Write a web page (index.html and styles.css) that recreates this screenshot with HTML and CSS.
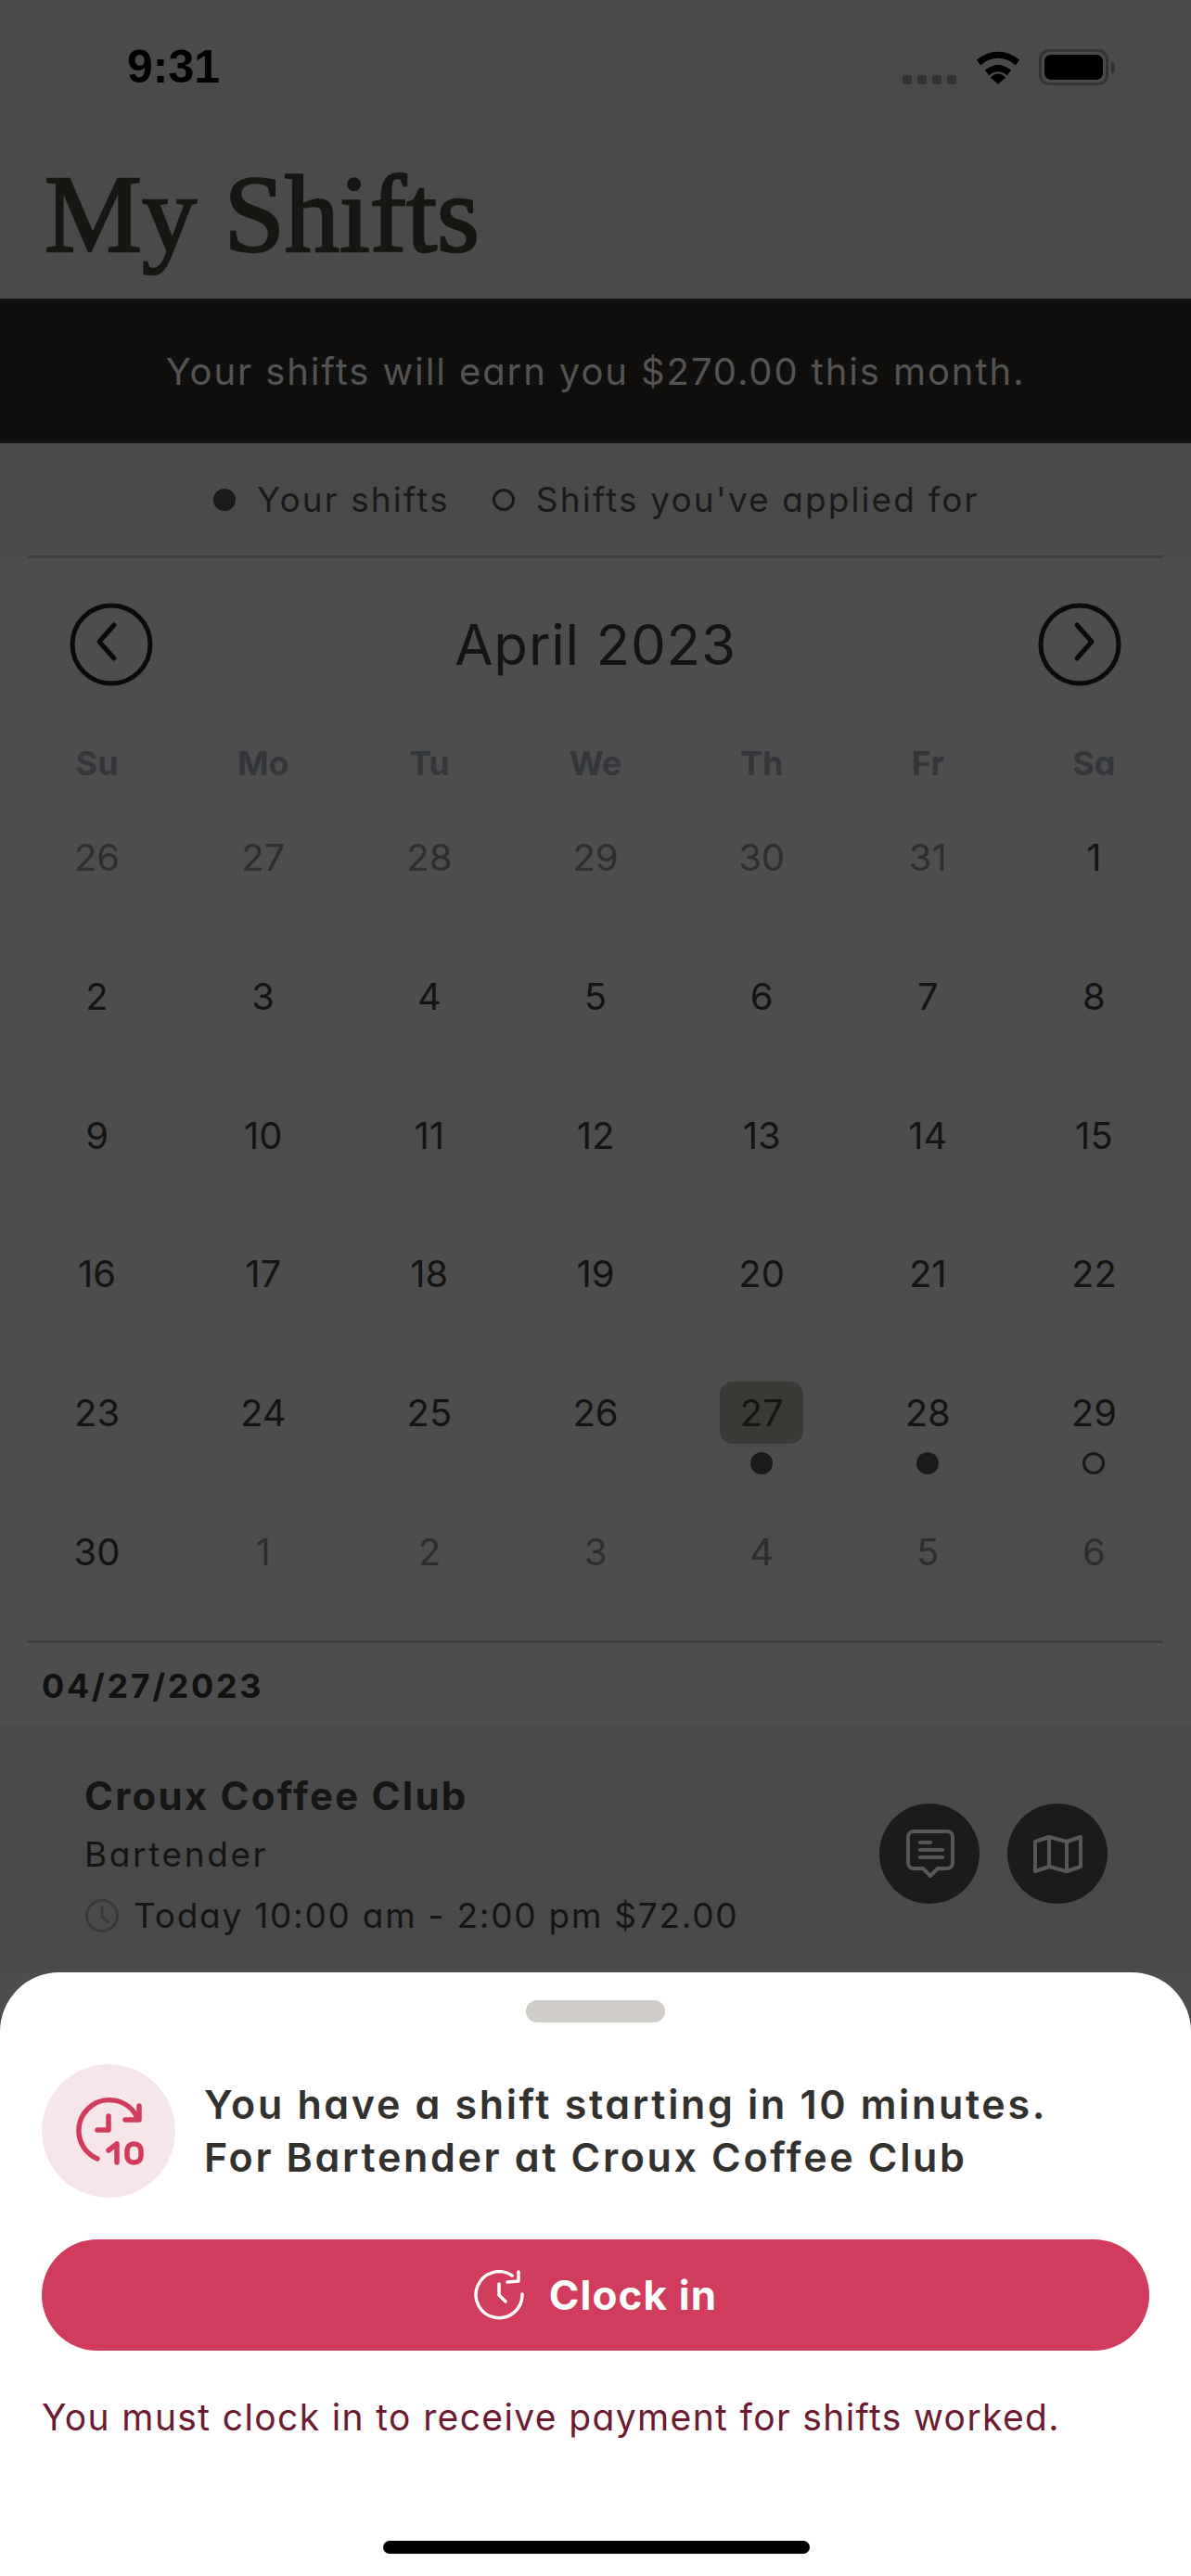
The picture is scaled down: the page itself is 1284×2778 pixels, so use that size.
FILE: index.html
```html
<!DOCTYPE html>
<html lang="en">
<head>
<meta charset="utf-8">
<title>My Shifts</title>
<link rel="stylesheet" href="styles.css">
</head>
<body>
<main class="screen">
  <header class="top">
    <div class="status">
      <span class="time">9:31</span>
      <div class="status-icons">
        <div class="signal"><i></i><i></i><i></i><i></i></div>
        <svg class="wifi" viewBox="0 0 52 38"><path d="M5 14.500C18 3.500 34 3.500 47 14.500" class="wifi-arc"/><path d="M14 25.500C22 19 30 19 38 25.500" class="wifi-arc"/><path d="M18 30.500C23 25 29 25 34 30.500L26 38Z" class="wifi-tip"/></svg>
        <div class="battery"><div class="battery-fill"></div></div>
        <div class="battery-cap"></div>
      </div>
    </div>
    <h1 class="title">My Shifts</h1>
  </header>
  <div class="banner">Your shifts will earn you $270.00 this month.</div>
  <div class="legend">
    <span class="dot"></span><span class="legend-label">Your shifts</span>
    <span class="dot hollow legend-second"></span><span class="legend-label">Shifts you've applied for</span>
  </div>
  <div class="rule"></div>
  <section class="calendar">
    <div class="month-bar">
      <svg class="nav" viewBox="0 0 90 90"><circle cx="45" cy="45" r="42"/><path d="M48 24 32 42 48 60"/></svg>
      <span class="month">April 2023</span>
      <svg class="nav" viewBox="0 0 90 90"><circle cx="45" cy="45" r="42"/><path d="M42 24 58 42 42 60"/></svg>
    </div>
    <div class="weekdays"><span>Su</span><span>Mo</span><span>Tu</span><span>We</span><span>Th</span><span>Fr</span><span>Sa</span></div>
    <div class="days">
      <div class="day muted"><span>26</span></div><div class="day muted"><span>27</span></div><div class="day muted"><span>28</span></div><div class="day muted"><span>29</span></div><div class="day muted"><span>30</span></div><div class="day muted"><span>31</span></div><div class="day"><span>1</span></div>
      <div class="day"><span>2</span></div><div class="day"><span>3</span></div><div class="day"><span>4</span></div><div class="day"><span>5</span></div><div class="day"><span>6</span></div><div class="day"><span>7</span></div><div class="day"><span>8</span></div>
      <div class="day"><span>9</span></div><div class="day"><span>10</span></div><div class="day"><span>11</span></div><div class="day"><span>12</span></div><div class="day"><span>13</span></div><div class="day"><span>14</span></div><div class="day"><span>15</span></div>
      <div class="day"><span>16</span></div><div class="day"><span>17</span></div><div class="day"><span>18</span></div><div class="day"><span>19</span></div><div class="day"><span>20</span></div><div class="day"><span>21</span></div><div class="day"><span>22</span></div>
      <div class="day"><span>23</span></div><div class="day"><span>24</span></div><div class="day"><span>25</span></div><div class="day"><span>26</span></div><div class="day selected"><span>27</span><i class="dot"></i></div><div class="day"><span>28</span><i class="dot"></i></div><div class="day"><span>29</span><i class="dot hollow"></i></div>
      <div class="day"><span>30</span></div><div class="day muted"><span>1</span></div><div class="day muted"><span>2</span></div><div class="day muted"><span>3</span></div><div class="day muted"><span>4</span></div><div class="day muted"><span>5</span></div><div class="day muted"><span>6</span></div>
    </div>
  </section>
  <div class="rule"></div>
  <div class="date-head">04/27/2023</div>
  <article class="shift">
    <div class="shift-info">
      <h2 class="venue">Croux Coffee Club</h2>
      <p class="role">Bartender</p>
      <p class="when">
        <svg class="mini-clock" viewBox="0 0 38 38"><circle cx="19" cy="19" r="16.500"/><path d="M19 9V20L26 26"/></svg>
        <span>Today 10:00 am - 2:00 pm $72.00</span>
      </p>
    </div>
    <div class="shift-actions">
      <button class="round" type="button"><svg viewBox="0 0 108 108"><path d="M37 30H73A6 6 0 0 1 79 36V64A6 6 0 0 1 73 70H63L55 78 47 70H37A6 6 0 0 1 31 64V36A6 6 0 0 1 37 30Z"/><path d="M44 42H55M44 50H68M44 58H68"/></svg></button>
      <button class="round" type="button"><svg viewBox="0 0 108 108"><path d="M30 41 45 36 64 41 79 36V68L64 73 45 68 30 73Z"/><path d="M45 36V68M64 41V73"/></svg></button>
    </div>
  </article>
</main>

<aside class="sheet">
  <div class="handle"></div>
  <div class="notice">
    <div class="notice-icon">
      <svg viewBox="0 0 144 144"><path d="M60 102A33 33 0 1 1 103 58"/><path d="M105 45V60H90"/><path d="M72 56V71H60"/><path d="M72 93 81 86V106"/><rect x="92" y="86" width="15" height="20" rx="7"/></svg>
    </div>
    <p class="notice-text">You have a shift starting in 10 minutes.<br>For Bartender at Croux Coffee Club</p>
  </div>
  <button class="clock-btn" type="button">
    <svg viewBox="0 0 54 54"><path d="M52 26A25 25 0 1 1 41 6"/><path d="M48 2V12L36 13"/><path d="M27 15V27L34 34"/></svg>
    <span>Clock in</span>
  </button>
  <p class="note">You must clock in to receive payment for shifts worked.</p>
  <div class="home"></div>
</aside>
</body>
</html>
```
FILE: styles.css
```css
* { box-sizing: border-box; }
html, body { margin: 0; padding: 0; }
body {
  width: 1284px;
  height: 2778px;
  overflow: hidden;
  position: relative;
  background: #4d4d4d;
  color: #141412;
  font-family: Inter, "Liberation Sans", sans-serif;
  font-feature-settings: "cv11" 1;
}
.screen { display: flex; flex-direction: column; }
.top { height: 322px; background: #4a4a4a; }
.status { height: 173px; position: relative; display: flex; }
.time {
  font: 700 50px/1 "Liberation Sans", sans-serif;
  color: #000;
  margin: 47px 0 0 137px;
}
.status-icons { position: absolute; left: 973px; top: 53px; display: flex; align-items: flex-start; }
.signal { display: flex; gap: 6px; margin-top: 28px; }
.signal i { width: 10px; height: 10px; border-radius: 3px; background: #333; }
.wifi { width: 52px; height: 38px; margin-left: 19px; }
.wifi-arc { fill: none; stroke: #000; stroke-width: 7; }
.wifi-tip { fill: #000; }
.battery {
  width: 75px; height: 39px; margin-left: 18px; padding: 3px;
  border: 3px solid #333; border-radius: 11px;
}
.battery-fill { height: 100%; background: #000; border-radius: 7px; }
.battery-cap { width: 4px; height: 12px; margin: 14px 0 0 3px; background: #333; border-radius: 0 4px 4px 0; }
.title {
  margin: 0 0 0 48px;
  font: 400 118px/1 "Liberation Serif", serif;
  -webkit-text-stroke: 2.500px #161613;
  color: #161613;
}
.banner {
  height: 156px;
  display: flex; align-items: center; justify-content: center;
  background: #100f0d;
  color: #545454;
  font-size: 40px;
  font-weight: 400;
  letter-spacing: 1.900px;
}
.legend {
  height: 121px;
  padding-left: 230px;
  background: #4a4a4a;
  display: flex; align-items: center;
  font-size: 37px;
  font-weight: 400;
  letter-spacing: 2.100px;
  color: #1b1a18;
}
.dot { width: 24px; height: 24px; border-radius: 50%; background: #1b1a18; flex: none; display: block; }
.dot.hollow { background: none; border: 3px solid #1b1a18; }
.legend-label { margin-left: 23px; }
.legend-second { margin-left: 46px; }
.rule { height: 3px; margin: 0 30px; background: #3f3f3f; flex: none; }
.calendar { height: 1167px; padding: 48px 15px 0; }
.month-bar {
  display: flex; align-items: center; justify-content: space-between;
  padding: 0 60px; height: 90px;
}
.nav { width: 90px; height: 90px; fill: none; stroke: #0a0a0a; stroke-linecap: round; stroke-linejoin: round; }
.nav circle { stroke-width: 5px; }
.nav path { stroke-width: 5px; }
.month { font-size: 60px; font-weight: 400; letter-spacing: .8px; color: #141412; }
.weekdays {
  margin-top: 58px;
  display: grid; grid-template-columns: repeat(7, 1fr);
  text-align: center;
  font-size: 36px; font-weight: 700;
  color: #33363b;
  height: 50px; line-height: 50px;
}
.days { margin-top: 43px; display: grid; grid-template-columns: repeat(7, 1fr); grid-auto-rows: 149.800px; }
.day { display: flex; flex-direction: column; align-items: center; font-size: 40px; font-weight: 400; color: #141412; }
.day span { width: 90px; height: 67px; line-height: 67px; text-align: center; border-radius: 14px; }
.day .dot { margin-top: 9px; }
.day.muted { color: #2e2e2e; }
.day.selected span { background: #3b3a36; }
.date-head {
  height: 90px; padding: 23px 0 0 45px;
  font-size: 36px; line-height: 46px; font-weight: 700;
  letter-spacing: 2.600px;
  color: #111110;
}
.shift {
  height: 265px; background: #4a4a4a;
  padding: 49px 90px 0 91px;
  display: flex; justify-content: space-between;
}
.venue { margin: 0; font-size: 42px; line-height: 52px; font-weight: 700; letter-spacing: 2.200px; color: #151513; }
.role { margin: 11px 0 0; font-size: 37px; line-height: 52px; font-weight: 400; letter-spacing: 2.600px; color: #151513; }
.when { margin: 14px 0 0; display: flex; align-items: center; gap: 15px; font-size: 37px; line-height: 52px; font-weight: 400; letter-spacing: 1.750px; color: #151513; }
.mini-clock { width: 38px; height: 38px; fill: none; stroke: #3a3936; stroke-width: 3px; stroke-linecap: round; }
.shift-actions { display: flex; gap: 30px; margin-top: 34px; }
.round { width: 108px; height: 108px; padding: 0; border: 0; border-radius: 50%; background: #1c1b19; }
.round svg { display: block; width: 108px; height: 108px; fill: none; stroke: #585858; stroke-width: 4px; stroke-linecap: round; stroke-linejoin: round; }

.sheet {
  position: absolute; left: 0; right: 0; top: 2127px; bottom: 0;
  background: #fff;
  border-radius: 64px 64px 0 0;
  padding: 30px 45px 0;
  display: flex; flex-direction: column;
}
.handle { width: 150px; height: 24px; border-radius: 12px; background: #d0cdc8; align-self: center; flex: none; }
.notice { display: flex; align-items: center; gap: 31px; margin-top: 45px; }
.notice-icon { width: 144px; height: 144px; border-radius: 50%; background: #f6e6ea; flex: none; }
.notice-icon svg { display: block; width: 144px; height: 144px; fill: none; stroke: #d13c5c; stroke-width: 5.500px; stroke-linecap: round; stroke-linejoin: round; }
.notice-text { margin: 0; font-size: 43px; line-height: 57px; font-weight: 600; letter-spacing: 2.650px; color: #32312e; }
.clock-btn {
  margin-top: 45px; height: 120px; width: 1194px; flex: none;
  border: 0; border-radius: 60px; background: #d13c5c; color: #fff;
  display: flex; align-items: center; justify-content: center; gap: 27px;
  font-family: inherit; font-size: 44px; font-weight: 700; letter-spacing: 1.100px;
  font-feature-settings: inherit;
}
.clock-btn svg { width: 54px; height: 54px; fill: none; stroke: #fff; stroke-width: 3.500px; stroke-linecap: round; stroke-linejoin: round; }
.note { margin: 46px 0 0; font-size: 39px; line-height: 52px; font-weight: 400; letter-spacing: 1.370px; color: #6b1a30; }
.home { position: absolute; left: 413px; top: 613px; width: 460px; height: 14px; border-radius: 7px; background: #000; }
```
